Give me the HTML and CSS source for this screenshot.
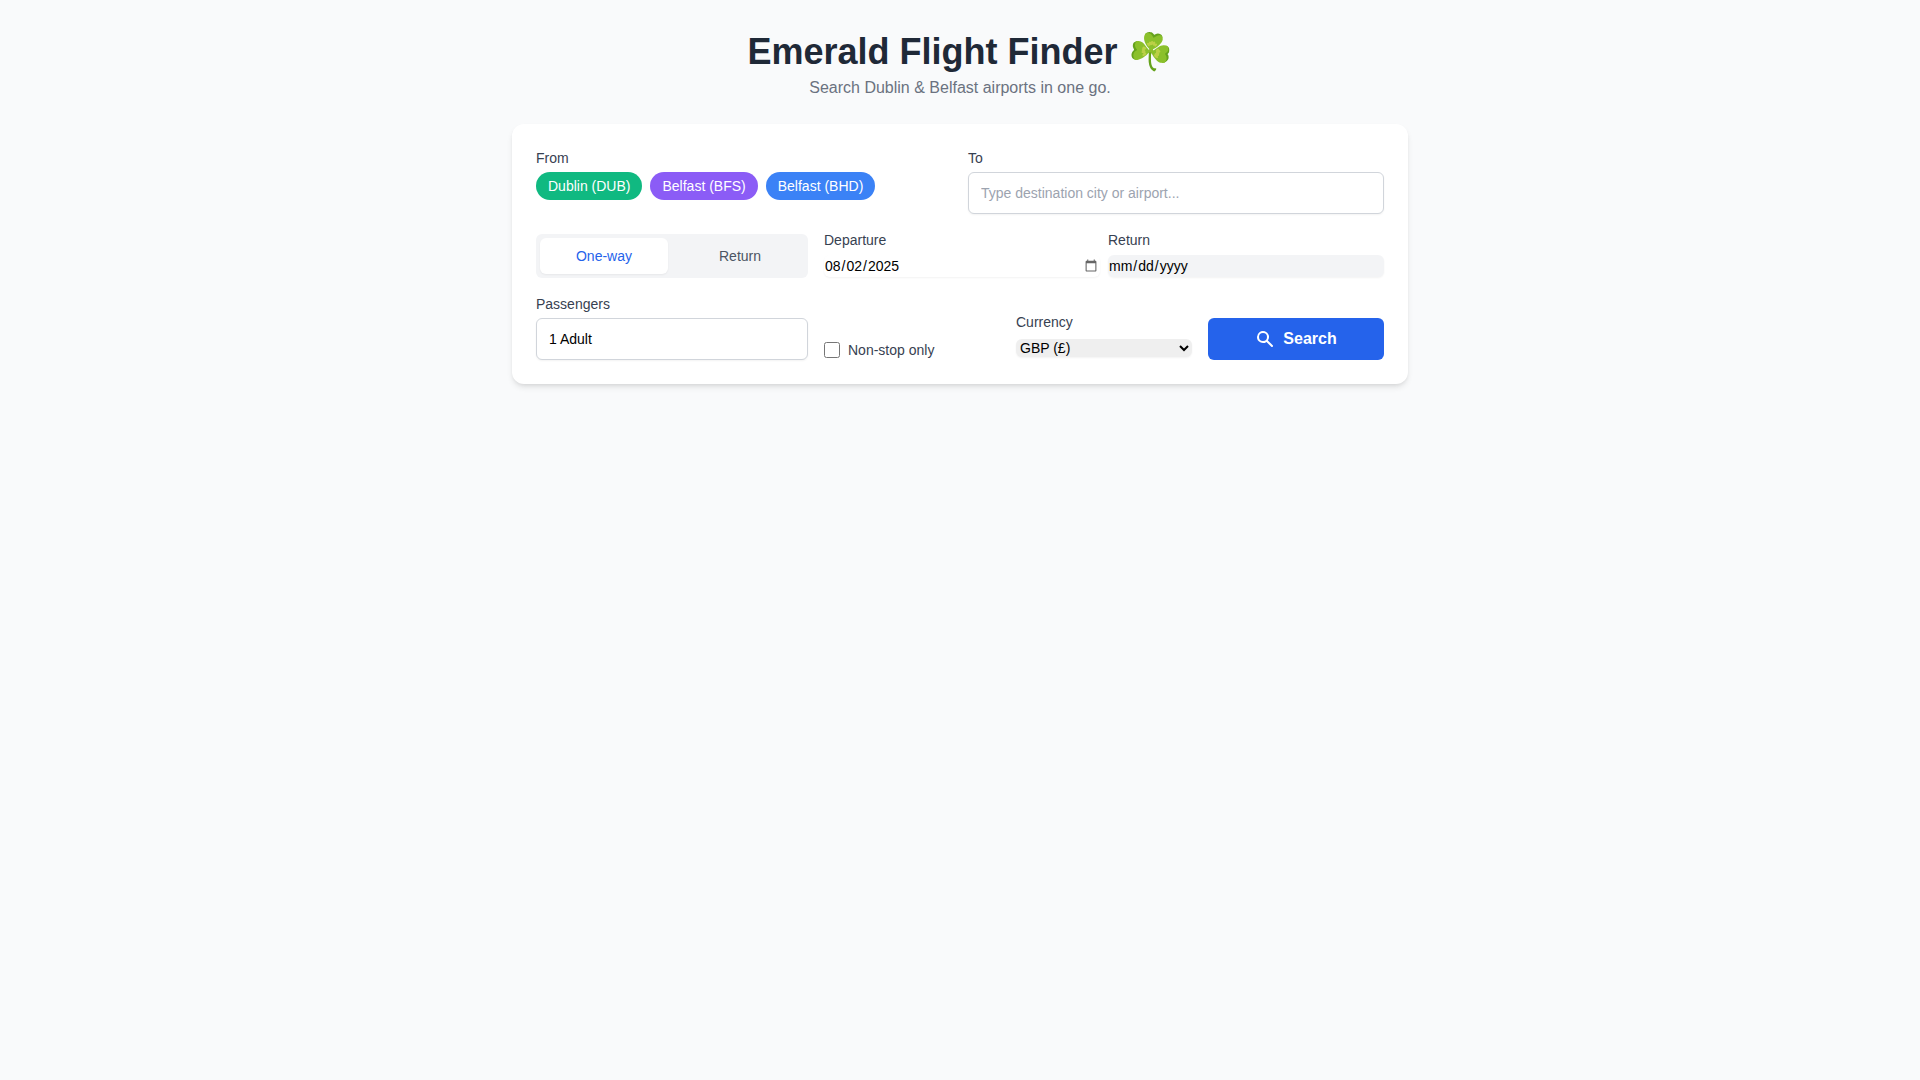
FILE: index.html
```html
<!DOCTYPE html>
<html lang="en">
<head>
  <meta charset="UTF-8">
  <meta name="viewport" content="width=device-width, initial-scale=1.0">
  <title>Emerald Flight Finder</title>
  <link rel="stylesheet" href="styles.css">
</head>
<body>
  <div class="container">
    <header class="header">
      <h1>Emerald Flight Finder ☘️</h1>
      <p>Search Dublin &amp; Belfast airports in one go.</p>
    </header>

    <form class="card" id="search-form">
      <!-- Airports -->
      <div class="row row-airports">
        <div class="field">
          <span class="label" id="from-label">From</span>
          <div class="chips" role="group" aria-labelledby="from-label">
            <button type="button" class="chip chip-dub">Dublin (DUB)</button>
            <button type="button" class="chip chip-bfs">Belfast (BFS)</button>
            <button type="button" class="chip chip-bhd">Belfast (BHD)</button>
          </div>
        </div>
        <div class="field">
          <label class="label" for="destination">To</label>
          <input type="text" id="destination" class="text-input" placeholder="Type destination city or airport...">
        </div>
      </div>

      <!-- Trip type and dates -->
      <div class="row row-split">
        <div class="toggle">
          <button type="button" class="toggle-btn active">One-way</button>
          <button type="button" class="toggle-btn">Return</button>
        </div>
        <div class="dates">
          <div class="field">
            <label class="label" for="departure">Departure</label>
            <div class="control">
              <input type="date" id="departure" class="date-input" value="2025-08-02">
            </div>
          </div>
          <div class="field">
            <label class="label" for="return">Return</label>
            <div class="control">
              <input type="date" id="return" class="date-input" disabled>
            </div>
          </div>
        </div>
      </div>

      <!-- Passengers and options -->
      <div class="row row-split">
        <div class="field">
          <label class="label" for="passengers">Passengers</label>
          <input type="text" id="passengers" class="text-input" value="1 Adult" readonly>
        </div>
        <div class="options">
          <label class="checkbox" for="nonstop">
            <input type="checkbox" id="nonstop">
            Non-stop only
          </label>
          <div class="field">
            <label class="label" for="currency">Currency</label>
            <div class="control">
              <select id="currency" class="select">
                <option>GBP (£)</option>
                <option>EUR (€)</option>
                <option>USD ($)</option>
              </select>
            </div>
          </div>
          <button type="submit" class="search-btn">
            <svg viewBox="0 0 20 20" fill="currentColor" aria-hidden="true">
              <path fill-rule="evenodd" d="M8 4a4 4 0 100 8 4 4 0 000-8zM2 8a6 6 0 1110.89 3.476l4.817 4.817a1 1 0 01-1.414 1.414l-4.816-4.816A6 6 0 012 8z" clip-rule="evenodd"/>
            </svg>
            Search
          </button>
        </div>
      </div>
    </form>
  </div>
</body>
</html>
```

FILE: styles.css
```css
* {
  box-sizing: border-box;
}

body {
  margin: 0;
  font-family: "Liberation Sans", Arial, sans-serif;
  font-size: 14px;
  line-height: 20px;
  color: #374151;
  background-color: #f9fafb;
}

button,
input,
select {
  margin: 0;
  font-family: inherit;
  font-size: inherit;
}

.container {
  max-width: 896px;
  margin: 0 auto;
  padding: 32px 0;
}

/* Header */
.header {
  margin-bottom: 24px;
  text-align: center;
}

.header h1 {
  margin: 0 0 4px;
  font-size: 36px;
  line-height: 40px;
  color: #1f2937;
}

.header p {
  margin: 0;
  font-size: 16px;
  line-height: 24px;
  color: #6b7280;
}

/* Search card */
.card {
  display: grid;
  gap: 16px;
  padding: 24px;
  background-color: #fff;
  border-radius: 12px;
  box-shadow: 0 4px 6px -1px rgba(0, 0, 0, 0.1), 0 2px 4px -2px rgba(0, 0, 0, 0.1);
}

.row {
  display: grid;
  gap: 16px;
}

.row-airports {
  grid-template-columns: 1fr 1fr;
}

.row-split {
  grid-template-columns: repeat(3, 1fr);
  align-items: end;
}

.label {
  display: block;
  margin-bottom: 4px;
}

.control {
  display: flex;
  align-items: center;
  height: 24px;
}

.text-input {
  display: block;
  width: 100%;
  height: 42px;
  padding: 0 12px;
  color: #000;
  background-color: #fff;
  border: 1px solid #d1d5db;
  border-radius: 6px;
  box-shadow: 0 1px 2px rgba(0, 0, 0, 0.05);
}

.text-input::placeholder {
  color: #9ca3af;
}

/* Airport chips */
.chips {
  display: flex;
  flex-wrap: wrap;
  gap: 8px;
}

.chip {
  padding: 4px 12px;
  line-height: 20px;
  color: #fff;
  border: none;
  border-radius: 14px;
  cursor: pointer;
}

.chip-dub {
  background-color: #10b981;
}

.chip-bfs {
  background-color: #8b5cf6;
}

.chip-bhd {
  background-color: #3b82f6;
}

/* One-way / return switch */
.toggle {
  display: flex;
  gap: 8px;
  padding: 4px;
  background-color: #f3f4f6;
  border-radius: 6px;
}

.toggle-btn {
  flex: 1 1 0;
  padding: 8px;
  line-height: 20px;
  color: #4b5563;
  background: none;
  border: none;
  border-radius: 6px;
  cursor: pointer;
}

.toggle-btn.active {
  color: #2563eb;
  background-color: #fff;
  box-shadow: 0 1px 2px rgba(0, 0, 0, 0.05);
}

/* Dates */
.dates {
  grid-column: span 2;
  display: grid;
  grid-template-columns: 1fr 1fr;
  gap: 8px;
}

.date-input {
  width: 100%;
  height: 22px;
  padding: 0;
  color: #000;
  background-color: #fff;
  border: none;
  border-radius: 6px;
  box-shadow: 0 1px 2px rgba(0, 0, 0, 0.05);
}

.date-input::-webkit-calendar-picker-indicator {
  opacity: 0.6;
}

.date-input:disabled {
  background-color: #f3f4f6;
}

/* Options */
.options {
  grid-column: span 2;
  display: grid;
  grid-template-columns: repeat(3, 1fr);
  gap: 16px;
  align-items: end;
}

.checkbox {
  display: flex;
  align-items: center;
  gap: 8px;
}

.checkbox input {
  width: 16px;
  height: 16px;
}

.select {
  width: 100%;
  height: 18px;
  color: #000;
  background-color: #efefef;
  border: none;
  border-radius: 6px;
  box-shadow: 0 1px 2px rgba(0, 0, 0, 0.05);
}

.search-btn {
  display: flex;
  align-items: center;
  justify-content: center;
  gap: 8px;
  height: 42px;
  font-size: 16px;
  font-weight: bold;
  color: #fff;
  background-color: #2563eb;
  border: none;
  border-radius: 6px;
  cursor: pointer;
}

.search-btn svg {
  width: 20px;
  height: 20px;
}
```
